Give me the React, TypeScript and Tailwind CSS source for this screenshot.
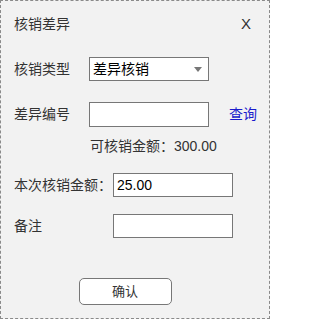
import { useState } from "react";

const font = { fontFamily: '"Liberation Sans", "Noto Sans CJK SC", sans-serif' };

function App() {
    const [code, setCode] = useState("");
    const [amount, setAmount] = useState("25.00");
    const [remark, setRemark] = useState("");

    return (
        <div style={font} className="w-[270px] h-[319px] border border-dashed border-[#8a8a8a] bg-[#f2f2f2] text-[#333] flex flex-col">
            <div className="flex items-center justify-between pl-[13px] pr-[18px] pt-[13px] h-[33px]">
                <span className="text-[14px] leading-[20px]">核销差异</span>
                <span className="text-[15px] leading-[20px]">X</span>
            </div>

            <div className="flex items-center pl-[13px] mt-[23px] h-[24px]">
                <span className="w-[75px] text-[14px]">核销类型</span>
                <div className="w-[120px] h-[24px] bg-white border border-[#777] flex items-center justify-between pl-[3px] pr-[6px]">
                    <span className="text-[14px] text-black">差异核销</span>
                    <span className="w-0 h-0 border-l-[4px] border-r-[4px] border-t-[5px] border-l-transparent border-r-transparent border-t-[#777]"></span>
                </div>
            </div>

            <div className="flex items-center pl-[13px] mt-[21px] h-[25px]">
                <span className="w-[75px] text-[14px]">差异编号</span>
                <input
                    value={code}
                    onChange={(e) => setCode(e.target.value)}
                    className="w-[120px] h-[25px] bg-white border border-[#777] outline-none px-[3px] text-[14px]"/>
                <span className="ml-[20px] text-[14px] text-[#1a1acc]">查询</span>
            </div>

            <div className="pl-[89px] mt-[9px] h-[20px] text-[14px] leading-[20px]">可核销金额：300.00</div>

            <div className="flex items-center pl-[13px] mt-[17px] h-[24px]">
                <span className="w-[99px] text-[14px]">本次核销金额：</span>
                <input
                    value={amount}
                    onChange={(e) => setAmount(e.target.value)}
                    className="w-[120px] h-[24px] bg-white border border-[#777] outline-none px-[3px] text-[14px] text-black"/>
            </div>

            <div className="flex items-center pl-[13px] mt-[17px] h-[24px]">
                <span className="w-[99px] text-[14px]">备注</span>
                <input
                    value={remark}
                    onChange={(e) => setRemark(e.target.value)}
                    className="w-[120px] h-[24px] bg-white border border-[#777] outline-none px-[3px] text-[14px]"/>
            </div>

            <div className="flex justify-center mt-[40px] pr-[20px]">
                <button className="w-[93px] h-[27px] bg-white border border-[#777] rounded-[5px] text-[13px]">确认</button>
            </div>
        </div>
    );
}

export default App;
